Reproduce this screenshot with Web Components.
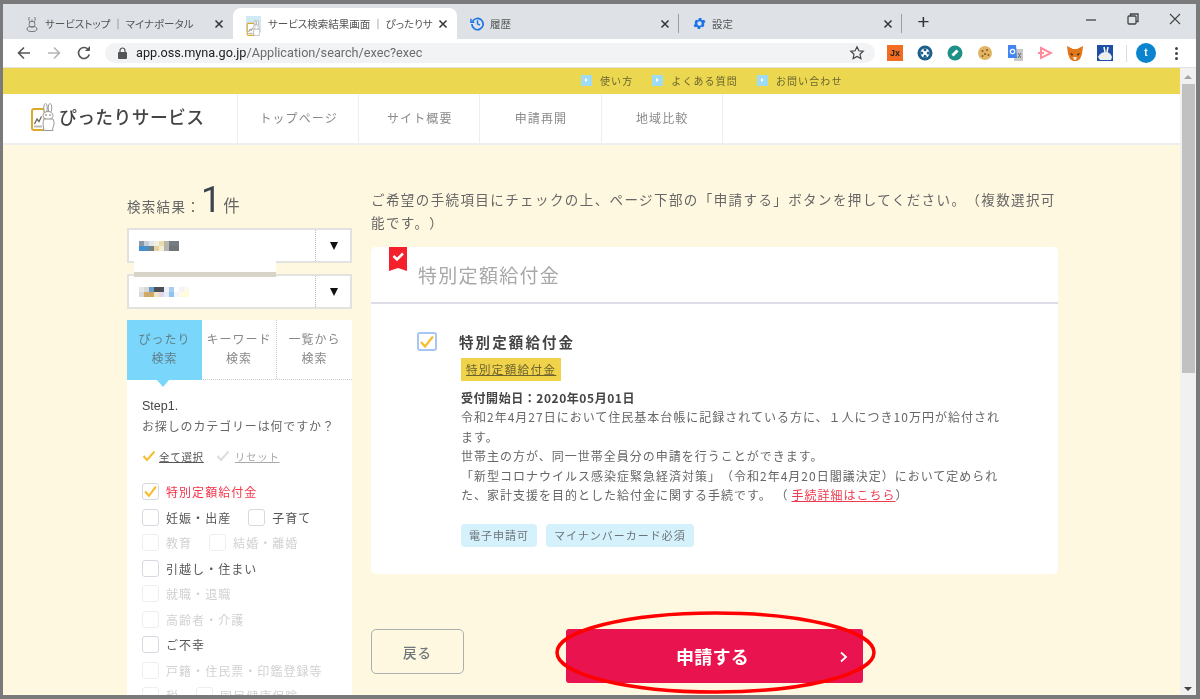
<!DOCTYPE html>
<html lang="ja">
<head>
<meta charset="utf-8">
<title>サービス検索結果画面</title>
<style>
html, body { margin: 0; padding: 0; height: 100%; overflow: hidden; background: #7a7a7a; }
body { font-family: "Noto Sans CJK JP", "Noto Sans", sans-serif; text-spacing-trim: space-all; }
</style>
</head>
<body>
<browser-window>
  <tab-strip>
    <browser-tab label="サービストップ ｜ マイナポータル" icon="rabbit" width="221"></browser-tab>
    <browser-tab label="サービス検索結果画面 ｜ ぴったりサービス" icon="logo" width="224" active></browser-tab>
    <browser-tab label="履歴" icon="history" width="222" sep></browser-tab>
    <browser-tab label="設定" icon="gear" width="223" sep></browser-tab>
  </tab-strip>
  <nav-toolbar></nav-toolbar>
  <page-scroller>
    <util-bar></util-bar>
    <site-header></site-header>
    <main-area>
      <search-side slot="side"></search-side>
      <div slot="content">
        <intro-text>ご希望の手続項目にチェックの上、ページ下部の「申請する」ボタンを押してください。（複数選択可能です。）</intro-text>
        <result-card></result-card>
        <action-row></action-row>
      </div>
    </main-area>
  </page-scroller>
</browser-window>

<script>
const logoSvg = `<svg viewBox="0 0 24 28" width="100%" height="100%">
  <rect x="1" y="6" width="12.500" height="21" rx="2" fill="#fff" stroke="#dba92c" stroke-width="2"/>
  <path d="M3.500 21l2.500-5 2 2.500 2.500-5" fill="none" stroke="#666" stroke-width="1.300"/>
  <rect x="3" y="22.500" width="8" height="2" fill="#bbb"/>
  <ellipse cx="14.500" cy="5" rx="1.800" ry="4.500" fill="#fff" stroke="#999"/>
  <ellipse cx="19" cy="5" rx="1.800" ry="4.500" fill="#fff" stroke="#999"/>
  <ellipse cx="17" cy="12.500" rx="5" ry="4" fill="#fff" stroke="#999"/>
  <path d="M13 16c-1.500 3-1 8 0 10l-1 1.500h10l-.5-2c2-3 2-7 .5-9.500z" fill="#fff" stroke="#999"/>
  <circle cx="15" cy="12" r=".8" fill="#666"/><circle cx="19" cy="12" r=".8" fill="#666"/>
</svg>`;

const tabIcons = {
  rabbit: `<svg viewBox="0 0 16 16" width="16" height="16" fill="none" stroke="#777" stroke-width="1"><path d="M5.500 1c-1.200 1-.8 3.600.3 4.800M10.500 1c1.200 1 .8 3.600-.3 4.800M8 3.500v2"/><circle cx="8" cy="8.300" r="3"/><ellipse cx="8" cy="13" rx="5" ry="2.500"/></svg>`,
  logo: `<span style="display:block;width:15px;height:16px;background:#cfe9f5">${logoSvg}</span>`,
  history: `<svg viewBox="0 0 16 16" width="15" height="15" fill="none" stroke="#1a73e8" stroke-width="1.800"><path d="M2.600 6A6 6 0 1 1 2 8.500"/><path d="M8 4.500V8.300l2.600 1.500" stroke-width="1.500"/><path d="M1 3v3.600h3.600" stroke-width="1.500"/></svg>`,
  gear: `<svg viewBox="0 0 24 24" width="15" height="15"><path fill="#1a73e8" fill-rule="evenodd" d="M19.400 13a7.500 7.500 0 0 0 0-2l2.100-1.600-2-3.500-2.500 1a7.500 7.500 0 0 0-1.700-1l-.4-2.700h-4l-.4 2.700a7.500 7.500 0 0 0-1.700 1l-2.500-1-2 3.500L4.600 11a7.500 7.500 0 0 0 0 2l-2.100 1.600 2 3.500 2.500-1a7.500 7.500 0 0 0 1.700 1l.4 2.700h4l.4-2.700a7.500 7.500 0 0 0 1.700-1l2.500 1 2-3.500zM12 15.500a3.500 3.500 0 1 1 0-7 3.500 3.500 0 0 1 0 7z"/></svg>`
};

class BrowserWindow extends HTMLElement {
  constructor() {
    super();
    this.attachShadow({ mode: 'open' });
    this.shadowRoot.innerHTML = `
      <style>
        :host { display: flex; flex-direction: column; width: 1200px; height: 699px; box-sizing: border-box;
                border: solid #7a7a7a; border-width: 4px 4px 4px 3px; overflow: hidden; position: relative;
                filter: blur(.5px); }
        svg.mark { position: absolute; left: 0; top: 0; width: 1200px; height: 699px; margin: -4px 0 0 -3px; pointer-events: none; }
      </style>
      <slot></slot>
      <svg class="mark" viewBox="0 0 1200 699"><ellipse cx="715.500" cy="652.500" rx="158.500" ry="39.500" fill="none" stroke="#f00" stroke-width="3.500"/></svg>`;
  }
}

class TabStrip extends HTMLElement {
  constructor() {
    super();
    this.attachShadow({ mode: 'open' });
    this.shadowRoot.innerHTML = `
      <style>
        :host { display: flex; height: 35px; flex: none; background: #dee1e6; align-items: flex-end; position: relative; padding-left: 9px; }
        .plus { width: 43px; text-align: center; font: 400 21px/32px "Liberation Sans", sans-serif; color: #333; align-self: center; }
        .caps { margin-left: auto; display: flex; align-self: flex-start; height: 30px; align-items: center; }
        .caps svg { display: block; }
        .caps span { width: 42px; display: flex; justify-content: center; }
      </style>
      <slot></slot>
      <div class="plus">+</div>
      <div class="caps">
        <span><svg width="12" height="12" fill="none" stroke="#444" stroke-width="1.300"><path d="M1 7h10"/></svg></span>
        <span><svg width="12" height="12" fill="none" stroke="#444" stroke-width="1.300"><rect x="1" y="3" width="8" height="8" rx="1"/><path d="M3.500 3V1h7.500v7.500H9"/></svg></span>
        <span><svg width="12" height="12" fill="none" stroke="#444" stroke-width="1.100"><path d="M1 1l10 10M11 1L1 11"/></svg></span>
      </div>`;
  }
}

class BrowserTab extends HTMLElement {
  constructor() {
    super();
    this.attachShadow({ mode: 'open' });
  }
  connectedCallback() {
    const active = this.hasAttribute('active');
    const sep = this.hasAttribute('sep');
    this.shadowRoot.innerHTML = `
      <style>
        :host { display: flex; height: 31px; width: ${this.getAttribute('width')}px; flex: none; box-sizing: border-box;
                align-items: center; padding: 0 9px 0 12px; gap: 5px; position: relative;
                font: 10.500px/31px "Noto Sans CJK JP", sans-serif; font-feature-settings: "palt"; color: #555;
                background: ${active ? '#fff' : 'transparent'}; border-radius: ${active ? '8px 8px 0 0' : '0'}; }
        .ic { flex: none; width: 16px; height: 16px; display: flex; align-items: center; justify-content: center; }
        .t { flex: 1; white-space: nowrap; overflow: hidden; padding-left: ${active ? 2 : 0}px; }
        .x { flex: none; width: 10px; height: 10px; }
        .sep { position: absolute; right: 0; top: 6px; height: 19px; width: 1px; background: #9aa0a6; }
      </style>
      <span class="ic">${tabIcons[this.getAttribute('icon')]}</span>
      <span class="t">${this.getAttribute('label')}</span>
      <svg class="x" viewBox="0 0 10 10" fill="none" stroke="#333" stroke-width="1.500"><path d="M1.500 1.500l7 7M8.500 1.500l-7 7"/></svg>
      ${sep ? '<span class="sep"></span>' : ''}`;
  }
}

class NavToolbar extends HTMLElement {
  constructor() {
    super();
    this.attachShadow({ mode: 'open' });
    this.shadowRoot.innerHTML = `
      <style>
        :host { display: flex; flex: none; height: 29px; background: #fff; align-items: center; padding-left: 13px; box-sizing: border-box; border-bottom: 1px solid #e3e3e3; }
        .nav { display: flex; width: 89px; flex: none; }
        .nav svg { width: 16px; height: 16px; margin-right: 14px; flex: none; }
        .url { display: flex; align-items: center; width: 770px; height: 20px; flex: none; background: #f1f3f4; border-radius: 10px; box-sizing: border-box; padding: 0 10px 0 13px; font: 400 12.700px/20px Roboto, "Liberation Sans", sans-serif; color: #6a6c70; }
        .url b { font-weight: 400; color: #222; }
        .url svg.lock { width: 9px; height: 12px; margin-right: 9px; }
        .url svg.star { width: 16px; height: 16px; margin-left: auto; }
        .ext { display: flex; margin-left: 12px; align-items: center; }
        .ext > * { flex: none; }
        .ext svg { width: 16px; height: 16px; margin-right: 14px; display: block; }
        .jx { width: 16px; height: 16px; margin-right: 14px; background: #f26d21; color: #222; font: 700 9px/16px "Liberation Sans", sans-serif; text-align: center; }
        .div { width: 1px; height: 17px; background: #ddd; margin: 0 9px 0 -1px; }
        .avatar { width: 20px; height: 20px; border-radius: 50%; background: #0a84cf; color: #fff; font: 700 10px/20px "Liberation Sans", sans-serif; text-align: center; margin-right: 19px; }
        .dots { width: 4px; display: flex; flex-direction: column; gap: 2px; }
        .dots i { width: 3px; height: 3px; border-radius: 50%; background: #444; }
      </style>
      <div class="nav">
        <svg viewBox="0 0 16 16" fill="none" stroke="#555" stroke-width="1.600"><path d="M14 8H2.500M8 2.500L2.500 8 8 13.500"/></svg>
        <svg viewBox="0 0 16 16" fill="none" stroke="#b5b5b5" stroke-width="1.600"><path d="M2 8h11.500M8 2.500L13.500 8 8 13.500"/></svg>
        <svg viewBox="0 0 16 16" fill="none" stroke="#555" stroke-width="1.600"><path d="M13.300 9.500A5.500 5.500 0 1 1 12 4.200"/><path d="M13.500 1.500v4h-4" fill="#555" stroke-width="1"/></svg>
      </div>
      <div class="url">
        <svg class="lock" viewBox="0 0 9 12"><path d="M2 5V3.500a2.500 2.500 0 0 1 5 0V5" fill="none" stroke="#555" stroke-width="1.200"/><rect y="5" width="9" height="7" rx="1" fill="#555"/></svg>
        <span><b>app.oss.myna.go.jp</b>/Application/search/exec?exec</span>
        <svg class="star" viewBox="0 0 16 16" fill="none" stroke="#444" stroke-width="1.200"><path d="M8 1.800l1.900 4 4.300.5-3.200 3 .9 4.300L8 11.400l-3.900 2.200.9-4.300-3.200-3 4.300-.5z"/></svg>
      </div>
      <div class="ext">
        <div class="jx">Jx</div>
        <svg viewBox="0 0 16 16"><circle cx="8" cy="8" r="7.500" fill="#1c5f8c"/><circle cx="8" cy="8" r="4.500" fill="#fff"/><circle cx="8" cy="4.800" r="1.500" fill="#1c5f8c"/><circle cx="8" cy="11.200" r="1.500" fill="#1c5f8c"/><circle cx="4.800" cy="8" r="1.500" fill="#1c5f8c"/><circle cx="11.200" cy="8" r="1.500" fill="#1c5f8c"/></svg>
        <svg viewBox="0 0 16 16"><circle cx="8" cy="8" r="7.500" fill="#1f9088"/><path d="M5.500 10.500l5-5" stroke="#fff" stroke-width="3"/></svg>
        <svg viewBox="0 0 16 16"><circle cx="8" cy="8" r="7" fill="#e2b565"/><g fill="#8a5a22"><circle cx="5.500" cy="6" r="1.100"/><circle cx="10" cy="5" r="1"/><circle cx="8" cy="9" r="1.100"/><circle cx="11.500" cy="10" r="1"/><circle cx="5.500" cy="11" r="1"/></g></svg>
        <svg viewBox="0 0 16 16"><rect x="7" y="4" width="9" height="12" fill="#c9c9c9"/><path d="M1 0h8l1 13H1z" fill="#4285f4"/><circle cx="5.500" cy="6.500" r="2.200" fill="none" stroke="#fff" stroke-width="1.200"/><path d="M11 8l3 5M14 8l-3 5" stroke="#666"/></svg>
        <svg viewBox="0 0 16 16" fill="none" stroke="#ff8b98" stroke-width="2"><path d="M4 3l10 5-10 5z"/><path d="M1 8h6"/></svg>
        <svg viewBox="0 0 16 16"><path d="M0 1l6 3h4l6-3-1 8-2 5-3 2H6l-3-2-2-5z" fill="#e2761b"/><path d="M3 8l3 1-1 2zM13 8l-3 1 1 2z" fill="#3a2a1c"/><path d="M6 12h4l-1 3H7z" fill="#f4e2cf"/></svg>
        <svg viewBox="0 0 16 16"><rect width="16" height="16" fill="#1d4fa5"/><path d="M7 2l1 5M11 2l-1 5" stroke="#fff" stroke-width="1.500"/><path d="M1 12c2-4 5-5 8-5 3 0 5 2 6 5l-1 3H3z" fill="#eee"/></svg>
        <div class="div"></div>
        <div class="avatar">t</div>
        <div class="dots"><i></i><i></i><i></i></div>
      </div>`;
  }
}

class PageScroller extends HTMLElement {
  constructor() {
    super();
    this.attachShadow({ mode: 'open' });
    this.shadowRoot.innerHTML = `
      <style>
        :host { display: flex; flex: 1; min-height: 0; overflow: hidden; }
        .view { flex: 1; min-width: 0; display: flex; flex-direction: column; overflow: hidden; }
        .bar { flex: none; width: 16px; background: #f1f1f1; display: flex; flex-direction: column; align-items: center; }
        .up { width: 0; height: 0; margin: 7px 0 5px; border: 4px solid transparent; border-top: 0; border-bottom: 4px solid #a3a3a3; }
        .thumb { width: 13px; height: 289px; background: #c1c1c1; }
        .down { width: 0; height: 0; margin: auto 0 4px; border: 4px solid transparent; border-bottom: 0; border-top: 4px solid #444; }
      </style>
      <div class="view"><slot></slot></div>
      <div class="bar"><div class="up"></div><div class="thumb"></div><div class="down"></div></div>`;
  }
}

class UtilBar extends HTMLElement {
  constructor() {
    super();
    this.attachShadow({ mode: 'open' });
    this.shadowRoot.innerHTML = `
      <style>
        :host { display: flex; flex: none; height: 26px; background: #ecd850; align-items: center; padding: 0 0 2px 578px; box-sizing: border-box;
                font-size: 10px; letter-spacing: 1.100px; color: #6a6530; font-family: "Noto Sans CJK JP", sans-serif; }
        a { display: flex; align-items: center; gap: 8px; margin-right: 19px; }
        i { width: 11px; height: 11px; background: #9fdcf3; display: flex; align-items: center; justify-content: center; }
        i::after { content: ''; border-left: 3px solid #fff; border-top: 2px solid transparent; border-bottom: 2px solid transparent; }
      </style>
      <a><i></i>使い方</a><a><i></i>よくある質問</a><a><i></i>お問い合わせ</a>`;
  }
}

class SiteHeader extends HTMLElement {
  constructor() {
    super();
    this.attachShadow({ mode: 'open' });
    this.shadowRoot.innerHTML = `
      <style>
        :host { display: flex; flex: none; height: 51px; background: #fff; box-sizing: border-box; border-bottom: 2px solid #eeeeee; }
        .brand { width: 234px; flex: none; display: flex; align-items: center; padding: 0 0 3px 28px; box-sizing: border-box; gap: 4px;
                 font: 500 17.800px/1 "Noto Sans CJK JP", sans-serif; color: #444; letter-spacing: .4px; }
        .logo { width: 24px; height: 28px; flex: none; }
        nav { display: flex; border-left: 1.500px solid #eee; }
        a { width: 121.200px; border-right: 1.500px solid #eee; display: flex; justify-content: center; align-items: center; padding: 0 0 3px 1px; box-sizing: border-box;
            font-size: 12px; letter-spacing: 1.100px; color: #8a8a8a; }
      </style>
      <div class="brand"><span class="logo">${logoSvg}</span>ぴったりサービス</div>
      <nav><a>トップページ</a><a>サイト概要</a><a>申請再開</a><a>地域比較</a></nav>`;
  }
}

class MainArea extends HTMLElement {
  constructor() {
    super();
    this.attachShadow({ mode: 'open' });
    this.shadowRoot.innerHTML = `
      <style>
        :host { display: flex; flex: 1; min-height: 0; background: #fff8e1; padding: 42px 0 0 124px; gap: 19px; overflow: hidden; }
        ::slotted([slot=side]) { width: 225px; flex: none; }
        ::slotted([slot=content]) { width: 687px; flex: none; }
      </style>
      <slot name="side"></slot><slot name="content"></slot>`;
  }
}

class FakeSelect extends HTMLElement {
  constructor() {
    super();
    this.attachShadow({ mode: 'open' });
  }
  connectedCallback() {
    const colors = (this.getAttribute('blocks') || '').split(',');
    this.shadowRoot.innerHTML = `
      <style>
        :host { display: flex; height: 35px; box-sizing: border-box; background: #fff; border: 2px solid #e2e2e0; }
        .val { flex: 1; display: flex; align-items: center; padding-left: 10px; }
        .val i { width: 5px; height: 5px; display: block; }
        .grid { display: grid; grid-template-columns: repeat(${this.getAttribute('cols')}, 5px); }
        .arr { width: 35px; flex: none; border-left: 1px dotted #bbb; display: flex; align-items: center; justify-content: center; padding-left: 1px; box-sizing: border-box; }
        .arr::after { content: ''; border-top: 8px solid #111; border-left: 4.500px solid transparent; border-right: 4.500px solid transparent; }
      </style>
      <div class="val"><div class="grid">${colors.map(c => `<i style="background:${c}"></i>`).join('')}</div></div>
      <div class="arr"></div>`;
  }
}

class CheckItem extends HTMLElement {
  constructor() {
    super();
    this.attachShadow({ mode: 'open' });
  }
  connectedCallback() {
    const off = this.hasAttribute('disabled');
    const on = this.hasAttribute('checked');
    this.shadowRoot.innerHTML = `
      <style>
        :host { display: inline-flex; align-items: center; gap: 7px; font-size: 12px; letter-spacing: 1.050px; white-space: nowrap;
                color: ${on ? '#f5354a' : off ? '#d2d2d2' : '#555'}; }
        .box { width: 17px; height: 17px; box-sizing: border-box; border: 1.500px solid ${off ? '#eeeeef' : '#d5d9e2'}; border-radius: 3px; flex: none; display: flex; }
        svg { width: 100%; height: 100%; }
      </style>
      <span class="box">${on ? '<svg viewBox="0 0 14 14" fill="none" stroke="#f6bd2e" stroke-width="2"><path d="M2 7l3.500 4L12 2.500"/></svg>' : ''}</span>
      <span>${this.getAttribute('label')}</span>`;
  }
}

class SearchSide extends HTMLElement {
  constructor() {
    super();
    this.attachShadow({ mode: 'open' });
    this.shadowRoot.innerHTML = `
      <style>
        :host { display: flex; flex-direction: column; font-family: "Noto Sans CJK JP", sans-serif; color: #666; }
        .count { display: flex; flex: none; align-items: baseline; height: 41px; font-size: 13.500px; letter-spacing: 1.300px; line-height: 1; }
        .count b { font: 400 36px/27px Roboto, sans-serif; color: #3a4550; margin: 0 2px 0 0; letter-spacing: 0; }
        .count span { font-size: 16.500px; }
        .selects { display: flex; flex: none; flex-direction: column; gap: 11px; position: relative; }
        .smear { position: absolute; left: 7px; top: 33px; width: 142px; height: 16px; background: linear-gradient(#fff 0 11px, #d8d5c8 11px); }
        .tabs { display: grid; flex: none; grid-template-columns: 75px 75px 75px; margin-top: 11px; height: 60px; background: #fff; text-align: center;
                font-size: 12px; line-height: 18.500px; letter-spacing: 1px; color: #888; position: relative; border-bottom: 1px dotted #ccc; box-sizing: border-box; }
        .tabs div { padding-top: 10px; border-right: 1px dotted #ccc; box-sizing: border-box; }
        .tabs div:last-child { border-right: 0; }
        .tabs .on { background: #7ad7fb; color: #5f7f8c; position: relative; border-right: 0; margin-bottom: -1px; }
        .tabs .on::after { content: ''; position: absolute; left: 30px; top: 100%; border-top: 7px solid #7ad7fb; border-left: 6px solid transparent; border-right: 6px solid transparent; }
        .panel { background: #fff; padding: 17px 15px 0; flex: 1 0 auto; }
        .step { font: 12px/19px "Noto Sans CJK JP", sans-serif; letter-spacing: .85px; }
        .step b { font: 400 12.500px/19px "Liberation Sans", sans-serif; letter-spacing: 0; color: #444; display: block; }
        .quick { display: flex; gap: 12px; margin-top: 12px; font-size: 10.500px; letter-spacing: .7px; height: 18px; align-items: center; }
        .quick a { display: flex; align-items: center; gap: 3px; text-decoration: underline; color: #555; }
        .quick a + a { color: #aaa; gap: 5px; }
        .quick svg { width: 14px; height: 12px; flex: none; }
        .list { display: flex; flex-direction: column; margin-top: 14px; }
        .row { display: flex; height: 25.500px; align-items: center; gap: 17px; }
      </style>
      <div class="count">検索結果：<b>1</b><span>件</span></div>
      <div class="selects">
        <fake-select cols="8" blocks="#8a97a4,#c5ced6,#e4e7ea,#f2efe0,#e8dcb0,#b8b6a8,#777c82,#777c82,#3f90d0,#4a8fc4,#777c82,#e4d2a0,#f4ecd0,#b4b4b0,#70757a,#70757a"></fake-select>
        <fake-select cols="10" blocks="#e6e6e6,#d8d8d8,#6a9ccc,#4a4f55,#4a4f55,#eef2f8,#a8cdf0,#fff,#f6f3f8,#fdfbe8,#d8d8d8,#d2aa68,#cfa868,#f2e2c8,#e0d6e8,#eceaf4,#8cc4f0,#f4f4ff,#fffbe0,#fffcd8"></fake-select>
        <div class="smear"></div>
      </div>
      <div class="tabs">
        <div class="on">ぴったり<br>検索</div><div>キーワード<br>検索</div><div>一覧から<br>検索</div>
      </div>
      <div class="panel">
        <div class="step"><b>Step1.</b>お探しのカテゴリーは何ですか？</div>
        <div class="quick">
          <a><svg viewBox="0 0 14 12" fill="none" stroke="#f6bd2e" stroke-width="2"><path d="M1.500 6l3.500 4L12.500 1.500"/></svg>全て選択</a>
          <a><svg viewBox="0 0 14 12" fill="none" stroke="#ddd" stroke-width="2"><path d="M1.500 6l3.500 4L12.500 1.500"/></svg>リセット</a>
        </div>
        <div class="list">
          <div class="row"><check-item checked label="特別定額給付金"></check-item></div>
          <div class="row"><check-item label="妊娠・出産"></check-item><check-item label="子育て"></check-item></div>
          <div class="row"><check-item disabled label="教育"></check-item><check-item disabled label="結婚・離婚"></check-item></div>
          <div class="row"><check-item label="引越し・住まい"></check-item></div>
          <div class="row"><check-item disabled label="就職・退職"></check-item></div>
          <div class="row"><check-item disabled label="高齢者・介護"></check-item></div>
          <div class="row"><check-item label="ご不幸"></check-item></div>
          <div class="row"><check-item disabled label="戸籍・住民票・印鑑登録等"></check-item></div>
          <div class="row"><check-item disabled label="税"></check-item><check-item disabled label="国民健康保険"></check-item></div>
        </div>
      </div>`;
  }
}

class IntroText extends HTMLElement {
  constructor() {
    super();
    this.attachShadow({ mode: 'open' });
    this.shadowRoot.innerHTML = `
      <style>
        :host { display: block; font-size: 13.500px; line-height: 23px; letter-spacing: 1.410px; color: #666; margin-bottom: 13px; padding-top: 1px; }
      </style>
      <slot></slot>`;
  }
}

class ResultCard extends HTMLElement {
  constructor() {
    super();
    this.attachShadow({ mode: 'open' });
    this.shadowRoot.innerHTML = `
      <style>
        :host { display: block; background: #fff; border-radius: 5px; height: 327px; position: relative; color: #666; }
        header { height: 57px; box-sizing: border-box; border-bottom: 2px solid #dcdde6; padding: 15px 0 0 47px;
                 font-size: 19px; line-height: 26px; letter-spacing: 1.300px; color: #a8a8a8; }
        .flag { position: absolute; left: 18px; top: 0; width: 18px; height: 24px; }
        .body { display: flex; padding: 27px 0 0 46px; gap: 22px; }
        .box { width: 20px; height: 19px; box-sizing: border-box; border: 2px solid #a6c6f5; border-radius: 3px; flex: none; margin-top: 1px; }
        .box svg { display: block; width: 100%; height: 100%; }
        .info { width: 546px; font-size: 12px; line-height: 19.400px; letter-spacing: 1px; padding-left: 2px; }
        h3 { margin: 0 0 5px -2px; font-size: 14.500px; line-height: 22px; font-weight: 700; letter-spacing: 2.100px; color: #444; }
        .tag { display: inline-block; background: #f1d24b; padding: 0 5px; height: 23px; line-height: 22px; font-size: 11.500px; letter-spacing: 1.400px; text-decoration: underline; color: #6b6230; vertical-align: top; }
        .date { margin-top: 7px; font-weight: 700; color: #444; letter-spacing: .55px; }
        .tail { white-space: nowrap; }
        a { color: #ef3b50; text-decoration: underline; margin-left: 3px; }
        .chips { display: flex; gap: 9px; margin: 20px 0 0 0; }
        .chips span { background: #d5f1fb; border-radius: 4px; height: 23px; line-height: 23px; padding: 0 8px; font-size: 11px; letter-spacing: 1px; color: #6c7378; }
      </style>
      <svg class="flag" viewBox="0 0 18 24"><path d="M0 0h18v24l-9-3-9 3z" fill="#f4202c"/><path d="M4.500 9l3.500 3.500 6-6" fill="none" stroke="#fff" stroke-width="2.500"/></svg>
      <header>特別定額給付金</header>
      <div class="body">
        <span class="box"><svg viewBox="0 0 16 15" fill="none" stroke="#f6bd2e" stroke-width="2.200"><path d="M2 8l4 4.500L14 2.500"/></svg></span>
        <div class="info">
          <h3>特別定額給付金</h3>
          <span class="tag">特別定額給付金</span>
          <div class="date">受付開始日：2020年05月01日</div>
          <div>令和2年4月27日において住民基本台帳に記録されている方に、１人につき10万円が給付されます。</div>
          <div>世帯主の方が、同一世帯全員分の申請を行うことができます。</div>
          <div>「新型コロナウイルス感染症緊急経済対策」（令和2年4月20日閣議決定）において定められ</div>
          <div class="tail"><span>た、家計支援を目的とした給付金に関する手続です。 （</span><a>手続詳細はこちら</a><span>）</span></div>
          <div class="chips"><span>電子申請可</span><span>マイナンバーカード必須</span></div>
        </div>
      </div>`;
  }
}

class ActionRow extends HTMLElement {
  constructor() {
    super();
    this.attachShadow({ mode: 'open' });
    this.shadowRoot.innerHTML = `
      <style>
        :host { display: flex; align-items: flex-start; margin-top: 55px; gap: 102px; }
        .back { width: 93px; height: 45px; box-sizing: border-box; border: 1.500px solid #a9b0b0; border-radius: 5px; display: flex; align-items: center; justify-content: center;
                font-size: 13.500px; font-weight: 500; color: #6e777a; letter-spacing: 1px; }
        .go { width: 297px; height: 54px; background: #e8134f; border-radius: 3px; color: #fff; font-size: 18px; font-weight: 700; letter-spacing: .3px; padding-right: 4px; box-sizing: border-box;
              display: flex; align-items: center; justify-content: center; position: relative; }
        .go svg { position: absolute; right: 15px; top: 22px; width: 9px; height: 12px; }
      </style>
      <div class="back">戻る</div>
      <div class="go">申請する<svg viewBox="0 0 9 12" fill="none" stroke="#fff" stroke-width="1.800"><path d="M2 1.500L7 6l-5 4.500"/></svg></div>`;
  }
}

customElements.define('browser-window', BrowserWindow);
customElements.define('tab-strip', TabStrip);
customElements.define('browser-tab', BrowserTab);
customElements.define('nav-toolbar', NavToolbar);
customElements.define('page-scroller', PageScroller);
customElements.define('util-bar', UtilBar);
customElements.define('site-header', SiteHeader);
customElements.define('main-area', MainArea);
customElements.define('fake-select', FakeSelect);
customElements.define('check-item', CheckItem);
customElements.define('search-side', SearchSide);
customElements.define('intro-text', IntroText);
customElements.define('result-card', ResultCard);
customElements.define('action-row', ActionRow);
</script>
</body>
</html>
